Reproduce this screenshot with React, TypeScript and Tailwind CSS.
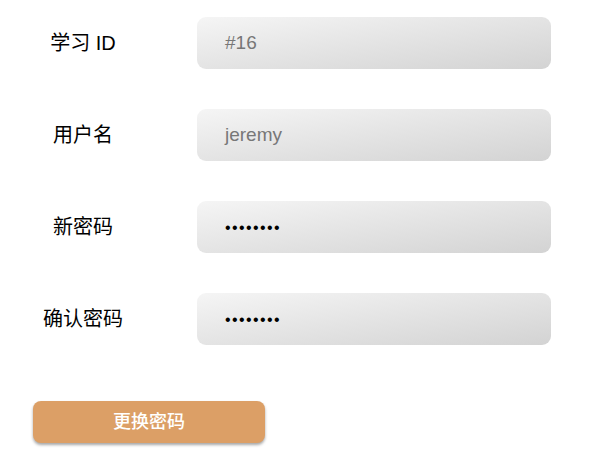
import React from "react";

const font = { fontFamily: '"Liberation Sans", "Noto Sans CJK SC", sans-serif' };

function Row({ label, value, password }: { label: string; value: string; password?: boolean }) {
  return (
    <div className="flex items-center h-[52px]">
      <div className="w-[166px] text-center text-[20px] text-black">{label}</div>
      <div className="ml-[31px] w-[354px] h-[52px] rounded-[9px] bg-gradient-to-br from-[#f5f5f5] to-[#d3d3d3] flex items-center pl-[28px]">
        {password ? (
          <span className="text-[16px] text-black tracking-[1.4px] pt-[2px]">••••••••</span>
        ) : (
          <span className="text-[19px] text-[#777777]">{value}</span>
        )}
      </div>
    </div>
  );
}

export default function App() {
  return (
    <div className="w-[592px] h-[467px] bg-white pt-[17px]" style={font}>
      <div className="flex flex-col gap-[40px]">
        <Row label="学习 ID" value="#16" />
        <Row label="用户名" value="jeremy" />
        <Row label="新密码" value="" password />
        <Row label="确认密码" value="" password />
      </div>
      <button className="mt-[56px] ml-[33px] w-[232px] h-[42px] rounded-[8px] bg-[#dc9f66] text-white text-[18px] font-medium shadow-[0_2px_3px_rgba(0,0,0,0.35)]">
        更换密码
      </button>
    </div>
  );
}
